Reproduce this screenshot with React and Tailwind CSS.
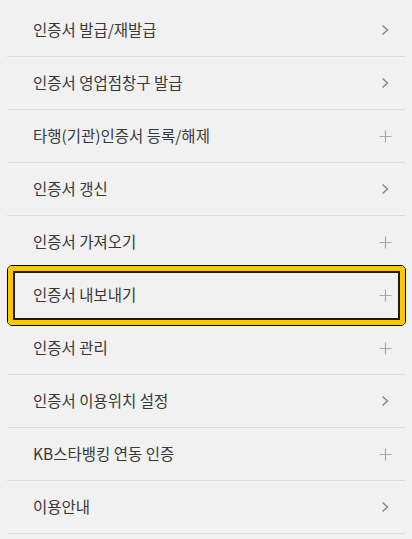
const ITEMS = [
  { label: "인증서 발급/재발급", icon: "chevron" },
  { label: "인증서 영업점창구 발급", icon: "chevron" },
  { label: "타행(기관)인증서 등록/해제", icon: "plus" },
  { label: "인증서 갱신", icon: "chevron" },
  { label: "인증서 가져오기", icon: "plus" },
  { label: "인증서 내보내기", icon: "plus", active: true },
  { label: "인증서 관리", icon: "plus" },
  { label: "인증서 이용위치 설정", icon: "chevron" },
  { label: "KB스타뱅킹 연동 인증", icon: "plus" },
  { label: "이용안내", icon: "chevron" },
];

function Chevron() {
  return (
    <svg width="12" height="12" viewBox="0 0 12 12" fill="none">
      <path d="M3.5 1.5 L8.5 6 L3.5 10.5" stroke="#8a8a8a" strokeWidth="1.5" />
    </svg>
  );
}

function Plus() {
  return (
    <svg width="13" height="13" viewBox="0 0 13 13" fill="none">
      <path d="M6.5 0.5 V12.5 M0.5 6.5 H12.5" stroke="#a8a8a8" strokeWidth="1.2" />
    </svg>
  );
}

export default function App() {
  return (
    <div
      className="w-[412px] h-[539px] bg-[#f1f1f1] overflow-hidden pt-[4px]"
      style={{ fontFamily: '"Noto Sans CJK KR", "Noto Sans", sans-serif' }}
    >
      <ul className="px-[7px]">
        {ITEMS.map((item) => (
          <li
            key={item.label}
            className="relative flex items-center justify-between h-[53px] border-b border-[#dcdcdc] pl-[26px] pr-[13px]"
          >
            <span className="text-[15.5px] text-[#383838]">{item.label}</span>
            <span className="flex items-center justify-center w-[14px]">
              {item.icon === "chevron" ? <Chevron /> : <Plus />}
            </span>
            {item.active && (
              <div className="absolute left-0 right-[-1px] top-[-4px] bottom-[-5px] rounded-[5px] border border-black bg-transparent">
                <div className="h-full w-full rounded-[4px] border-[5px] border-[#fcc800]">
                  <div className="h-full w-full border-2 border-[#1a1a1a]"></div>
                </div>
              </div>
            )}
          </li>
        ))}
      </ul>
    </div>
  );
}
